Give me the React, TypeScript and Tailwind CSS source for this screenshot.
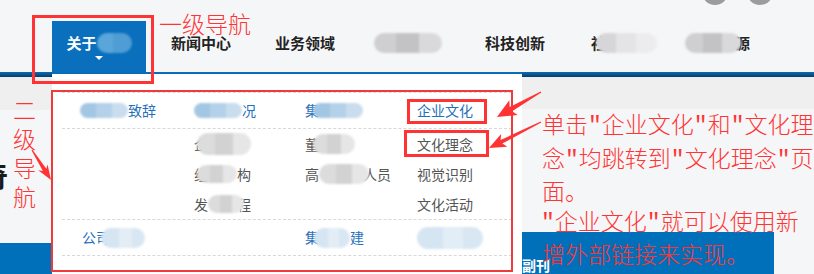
import React from "react";

const tones = {
  blue: "bg-[linear-gradient(90deg,#a3c7e3_0%,#a3c7e3_33%,#b4d1e9_33%,#b4d1e9_66%,#c9ddee_66%)]",
  light: "bg-[linear-gradient(90deg,#d5e5f2_0%,#d5e5f2_40%,#e2edf6_40%,#e2edf6_70%,#d9e7f3_70%)]",
  grey: "bg-[linear-gradient(90deg,#dcdcdc_0%,#dcdcdc_33%,#d2d2d2_33%,#d2d2d2_66%,#e6e6e6_66%)]",
  pale: "bg-[linear-gradient(90deg,#d6d6d8_0%,#d6d6d8_33%,#e4e4e6_33%,#e4e4e6_66%,#ececee_66%)]",
  nav: "bg-[linear-gradient(90deg,#cfcfd2_0%,#cfcfd2_33%,#c3c3c6_33%,#c3c3c6_66%,#d9d9db_66%)]",
  tab: "bg-[linear-gradient(90deg,#5aa6da_0%,#5aa6da_45%,#4f9dd4_45%)]",
};

function Blur({ tone, className = "" }: { tone: keyof typeof tones; className?: string }) {
  return <span className={`relative z-10 inline-block shrink-0 rounded-full blur-[1px] ${tones[tone]} ${className}`} />;
}

// polygon points for a tapered screenshot-tool arrow
function arrow(tx: number, ty: number, px: number, py: number, hl: number, hw: number, ws: number) {
  const dx = px - tx;
  const dy = py - ty;
  const len = Math.hypot(dx, dy);
  const ux = dx / len;
  const uy = dy / len;
  const nx = -uy;
  const ny = ux;
  const bx = px - ux * hl;
  const by = py - uy * hl;
  const pts = [
    [tx + nx * 0.6, ty + ny * 0.6],
    [bx + (nx * ws) / 2, by + (ny * ws) / 2],
    [bx - ux * 3 + (nx * hw) / 2, by - uy * 3 + (ny * hw) / 2],
    [px, py],
    [bx - ux * 3 - (nx * hw) / 2, by - uy * 3 - (ny * hw) / 2],
    [bx - (nx * ws) / 2, by - (ny * ws) / 2],
    [tx - nx * 0.6, ty - ny * 0.6],
  ];
  return pts.map((p) => p.map((v) => v.toFixed(1)).join(",")).join(" ");
}

const Q = () => <span className="font-['Liberation_Mono',monospace]">"</span>;

function NavItem({ children, className = "" }: { children: React.ReactNode; className?: string }) {
  return (
    <div className={`flex h-[22px] items-center text-[15px] font-bold leading-[22px] text-[#222] ${className}`}>
      {children}
    </div>
  );
}

export default function App() {
  const blue = "text-[#1f70bd]";
  const grey = "text-[#555]";

  return (
    <div className="relative h-[274px] w-[814px] overflow-hidden bg-[#f5f6f8] font-['Noto_Sans_CJK_SC',sans-serif]">
      {/* Header nav */}
      <header className="flex h-[72px] pl-[52px] pt-[21px]">
        <div className="flex w-[94px] flex-col items-center bg-[#0a6fbc] pt-[11px]">
          <div className="flex h-[22px] items-center text-[15px] font-bold leading-[22px] text-white">
            关于
            <Blur tone="tab" className="h-[20px] w-[35px] rounded-[6px]" />
          </div>
          <div className="mt-[2px] h-0 w-0 border-x-[4px] border-t-[4px] border-x-transparent border-t-white" />
        </div>
        <div className="flex items-start pt-[11px]">
          <NavItem className="ml-[25px]">新闻中心</NavItem>
          <NavItem className="ml-[44px]">业务领域</NavItem>
          <NavItem className="ml-[39px]">
            <Blur tone="nav" className="h-[20px] w-[68px]" />
          </NavItem>
          <NavItem className="ml-[43px]">科技创新</NavItem>
          <NavItem className="ml-[46px]">
            社<Blur tone="pale" className="-ml-[10px] h-[20px] w-[61px]" />
          </NavItem>
          <NavItem className="ml-[28px]">
            <Blur tone="nav" className="-mr-[6px] h-[20px] w-[56px]" />源
          </NavItem>
        </div>
      </header>

      {/* Body */}
      <div className="flex h-[202px]">
        <div className="flex w-[52px] flex-col">
          <div className="h-[5px] bg-[linear-gradient(#0b6db6,#0b3b66)]" />
          <div className="h-[33px] bg-[#efefef]" />
          <div className="flex h-[133px] justify-end overflow-hidden pr-[44px] pt-[50px]">
            <span className="whitespace-nowrap text-[28px] font-bold leading-[30px] text-[#1a1a1a]">传奇</span>
          </div>
          <div className="flex-1 bg-[#0070bb]" />
        </div>

        {/* Dropdown */}
        <div className="w-[470px] border-t-2 border-[#0a6db5] bg-white px-[10px] pt-[18px] text-[14px]">
          <div className="border-t border-dashed border-[#d8d8d8]">
            <div className="grid h-[36px] grid-cols-[114px_111px_112px_1fr] items-center border-b border-dashed border-[#d8d8d8] pl-[18px]">
              <div className={`flex items-center ${blue}`}>
                <Blur tone="blue" className="h-[15px] w-[48px] rounded-[6px]" />致辞
              </div>
              <div className={`flex items-center ${blue}`}>
                <Blur tone="blue" className="h-[15px] w-[48px] rounded-[6px]" />况
              </div>
              <div className={`flex items-center ${blue}`}>
                集<Blur tone="blue" className="-ml-[6px] h-[15px] w-[50px] rounded-[6px]" />
              </div>
              <div className={blue}>企业文化</div>
            </div>
            <div className="grid grid-cols-[114px_111px_112px_1fr] border-b border-dashed border-[#d8d8d8] pl-[18px] leading-[30px]">
              <div />
              <div className={`flex flex-col ${grey}`}>
                <div className="flex h-[30px] items-center">
                  企<Blur tone="grey" className="-ml-[11px] h-[22px] w-[54px]" />
                </div>
                <div className="flex h-[30px] items-center">
                  组<Blur tone="grey" className="-ml-[11px] h-[18px] w-[40px]" />构
                </div>
                <div className="flex h-[30px] items-center">
                  发<Blur tone="grey" className="-mr-[7px] h-[18px] w-[36px]" />程
                </div>
              </div>
              <div className={`flex flex-col ${grey}`}>
                <div className="flex h-[30px] items-center">
                  董<Blur tone="grey" className="-ml-[6px] h-[20px] w-[42px]" />
                </div>
                <div className="flex h-[30px] items-center">
                  高<Blur tone="grey" className="-mr-[6px] h-[20px] w-[50px]" />人员
                </div>
                <div className="h-[30px]" />
              </div>
              <div className={`flex flex-col ${grey}`}>
                <div className="h-[30px]">文化理念</div>
                <div className="h-[30px]">视觉识别</div>
                <div className="h-[30px]">文化活动</div>
              </div>
            </div>
            <div className="grid h-[36px] grid-cols-[114px_111px_112px_1fr] items-center border-b border-dashed border-[#d8d8d8] pl-[18px]">
              <div className={`flex items-center pl-[2px] ${blue}`}>
                公司<Blur tone="light" className="-ml-[9px] h-[20px] w-[44px]" />
              </div>
              <div />
              <div className={`flex items-center ${blue}`}>
                集<Blur tone="light" className="-ml-[5px] h-[20px] w-[36px]" />建
              </div>
              <div className="flex items-center">
                <Blur tone="light" className="h-[22px] w-[66px]" />
              </div>
            </div>
          </div>
        </div>

        <div className="flex flex-1 flex-col">
          <div className="h-[5px] bg-[linear-gradient(#0b6db6,#0b3b66)]" />
          <div className="h-[35px] bg-[#efefef]" />
          <div className="h-[131px]" />
          <div className="flex flex-1">
            <div className="w-[252px] bg-[#0070bb] pt-[24px] text-[14px] font-bold leading-[18px] text-white">
              副刊
            </div>
          </div>
        </div>
      </div>

      {/* top-right header icons */}
      <div className="absolute left-[702px] top-[-21px] h-[26px] w-[26px] rounded-full bg-[#9c9c9e] blur-[0.5px]" />
      <div className="absolute left-[747px] top-[-21px] h-[26px] w-[26px] rounded-full bg-[#9c9c9e] blur-[0.5px]" />

      {/* annotations */}
      <div className="absolute left-[32px] top-[15px] h-[69px] w-[122px] border-[3px] border-[#f33]" />
      <div className="absolute left-[51px] top-[90px] h-[182px] w-[462px] border-2 border-[#ee3b3b]" />
      <div className="absolute left-[407px] top-[99px] h-[25px] w-[80px] border-[3px] border-[#f33]" />
      <div className="absolute left-[404px] top-[130px] h-[27px] w-[85px] border-[3px] border-[#f33]" />

      <div className="absolute left-[159px] top-[9px] whitespace-nowrap text-[23px] font-light leading-[28px] text-[#ff3535]">
        一级导航
      </div>
      <div className="absolute left-[13px] top-[95px] flex w-[23px] flex-col items-center text-[23px] font-light leading-[29px] text-[#ff3535]">
        <span>二</span>
        <span>级</span>
        <span>导</span>
        <span>航</span>
      </div>
      <div className="absolute left-[542px] top-[109px] whitespace-nowrap text-[23px] font-light leading-[29.5px] text-[#ff3535]">
        <div>
          单击<Q />企业文化<Q />和<Q />文化理
        </div>
        <div>
          念<Q />均跳转到<Q />文化理念<Q />页
        </div>
        <div>面。</div>
        <div className="-ml-[1px]">
          <Q />企业文化<Q />就可以使用新
        </div>
        <div>增外部链接来实现。</div>
      </div>

      <svg className="pointer-events-none absolute left-0 top-0" width="814" height="274">
        <polygon points={arrow(32, 150, 51, 180, 12, 11, 4)} fill="#f33" />
        <polygon points={arrow(541, 92, 497, 117, 16, 17, 5)} fill="#f33" />
        <polygon points={arrow(541, 122, 489, 148, 14, 14, 4)} fill="#f33" />
      </svg>
    </div>
  );
}
